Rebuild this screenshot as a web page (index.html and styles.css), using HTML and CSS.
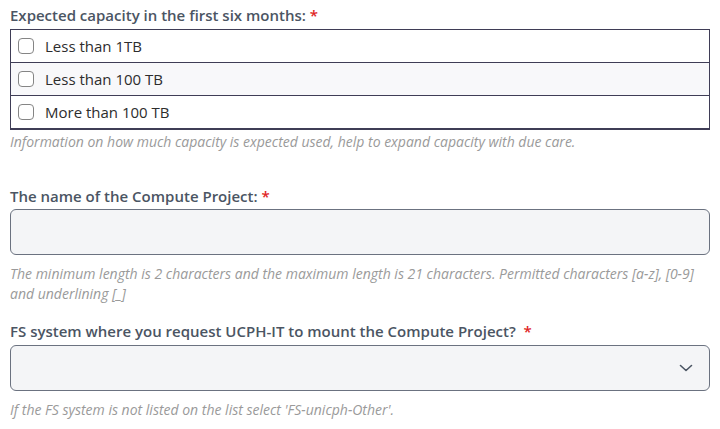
FILE: index.html
```html
<!DOCTYPE html>
<html>
<head>
<meta charset="utf-8">
<link rel="stylesheet" href="styles.css">
</head>
<body>
<div class="form">
  <div class="field field-first">
    <div class="label">Expected capacity in the first six months: <span class="req">*</span></div>
    <div class="options">
      <label class="option"><span class="box"></span><span>Less than 1TB</span></label>
      <label class="option alt"><span class="box"></span><span>Less than 100 TB</span></label>
      <label class="option"><span class="box"></span><span>More than 100 TB</span></label>
    </div>
    <div class="help">Information on how much capacity is expected used, help to expand capacity with due care.</div>
  </div>

  <div class="field field-second">
    <div class="label label-tight">The name of the Compute Project: <span class="req">*</span></div>
    <div class="input"></div>
    <div class="help help-loose">The minimum length is 2 characters and the maximum length is 21 characters. Permitted characters [a-z], [0-9] and underlining [_]</div>
  </div>

  <div class="field field-third">
    <div class="label">FS system where you request UCPH-IT to mount the Compute Project? &nbsp;<span class="req">*</span></div>
    <div class="input select">
      <svg width="14" height="8" viewBox="0 0 14 8"><path d="M1.5 1.5 L7 6.5 L12.5 1.5" fill="none" stroke="#4b5563" stroke-width="1.6" stroke-linecap="round" stroke-linejoin="round"/></svg>
    </div>
    <div class="help help-loose">If the FS system is not listed on the list select 'FS-unicph-Other'.</div>
  </div>
</div>
</body>
</html>
```

FILE: styles.css
```css
* { box-sizing: border-box; }
body {
  margin: 0;
  font-family: "Open Sans", "Noto Sans", sans-serif;
  background: #fff;
  color: #333;
}
.form {
  padding: 0 10px;
}
.field { display: flex; flex-direction: column; }
.field-first { padding-top: 5px; }
.field-second { margin-top: 34px; }
.field-third { margin-top: 17px; }
.label {
  font-size: 15px;
  font-weight: 600;
  color: #4b5563;
  line-height: 20px;
  margin-bottom: 4px;
}
.label-tight { margin-bottom: 3px; }
.req { color: #e02424; }
.options {
  border: 1px solid #3f3d56;
  border-bottom-width: 2px;
}
.option {
  display: flex;
  align-items: center;
  height: 33px;
  padding-left: 7px;
  font-size: 15px;
  color: #2d2d2d;
  border-top: 1px solid #3f3d56;
}
.option:first-child { border-top: none; height: 32px; }
.option.alt { background: #f8f8fa; }
.box {
  width: 16px;
  height: 16px;
  border: 1.5px solid #858585;
  border-radius: 4px;
  margin-right: 11px;
  background: #fff;
}
.help {
  font-size: 14px;
  font-style: italic;
  color: #9a9a9a;
  line-height: 20px;
  margin-top: 2px;
}
.help-loose { margin-top: 3px; }
.input {
  height: 46px;
  border: 1px solid #6b7280;
  border-radius: 6px;
  background: #f4f5f7;
  margin-bottom: 6px;
}
.select {
  display: flex;
  align-items: center;
  justify-content: flex-end;
  padding-right: 16px;
}
```
